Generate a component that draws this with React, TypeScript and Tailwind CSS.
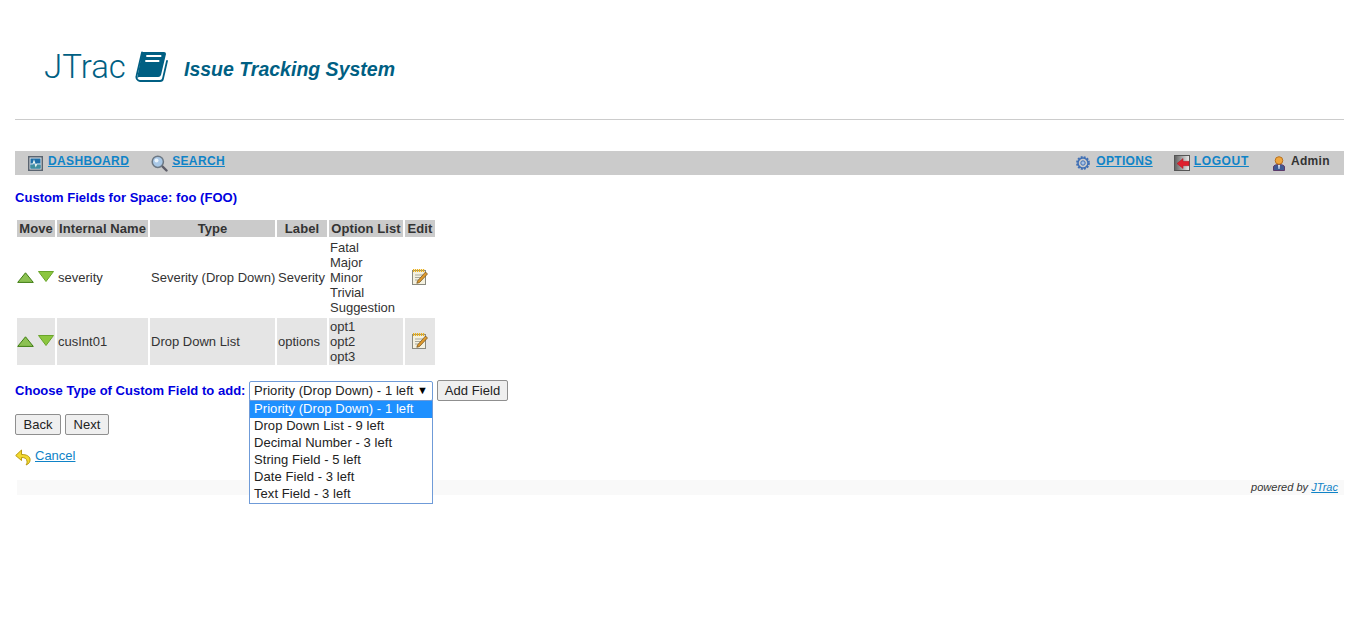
import React from "react";

const ROWS = [
  { name: "severity", type: "Severity (Drop Down)", label: "Severity", options: ["Fatal", "Major", "Minor", "Trivial", "Suggestion"], shaded: false },
  { name: "cusInt01", type: "Drop Down List", label: "options", options: ["opt1", "opt2", "opt3"], shaded: true },
];

const CHOICES = [
  "Priority (Drop Down) - 1 left",
  "Drop Down List - 9 left",
  "Decimal Number - 3 left",
  "String Field - 5 left",
  "Date Field - 3 left",
  "Text Field - 3 left",
];

// --- icons ---
function BookLogo() {
  return (
    <svg width="34" height="32" viewBox="0 0 34 32" className="shrink-0">
      <path d="M8 1h22a2 2 0 0 1 2 2l-5 21a3 3 0 0 1-3 2H5a2.500 2.500 0 0 0-2 1.500L8 2z" fill="#005f83" />
      <path d="M8 1.500 2.500 25a4 4 0 0 0 3.500 5h20a3 3 0 0 0 3-2.500L33 10" fill="none" stroke="#005f83" strokeWidth="1.800" strokeLinecap="round" />
      <path d="M12.300 5h15M11.300 10h14" fill="none" stroke="#fff" strokeWidth="1.800" />
    </svg>
  );
}

function DashboardIcon() {
  return (
    <svg width="15" height="15" viewBox="0 0 15 15" className="shrink-0">
      <rect x="0.750" y="0.750" width="13.500" height="13.500" fill="#dfe3e6" stroke="#5a6470" strokeWidth="1.500" />
      <rect x="2.500" y="2.500" width="10" height="10" fill="#1f6fa8" />
      <rect x="2.500" y="9" width="10" height="3.500" fill="#3f8f9f" />
      <path d="M2.500 8H5l1-3 1.800 5 1-2h3.700" fill="none" stroke="#eaf6f0" strokeWidth="1.100" />
    </svg>
  );
}

function SearchIcon() {
  return (
    <svg width="17" height="17" viewBox="0 0 17 17" className="shrink-0">
      <path d="m10.500 10.500 5 5" stroke="#5d5d68" strokeWidth="2.400" strokeLinecap="round" />
      <circle cx="6.800" cy="6.800" r="5.600" fill="#a9c8e6" stroke="#6c7884" strokeWidth="1.500" />
      <circle cx="5.500" cy="5.500" r="2" fill="#e9f3fb" />
    </svg>
  );
}

function OptionsIcon() {
  return (
    <svg width="14" height="14" viewBox="0 0 14 14" className="shrink-0">
      <circle cx="7" cy="7" r="5" fill="none" stroke="#3f6fb5" strokeWidth="1.500" />
      <circle cx="7" cy="7" r="6" fill="none" stroke="#3f6fb5" strokeWidth="1.800" strokeDasharray="2 1.140" />
      <circle cx="7" cy="7" r="2.200" fill="#a9c3e6" stroke="#3f6fb5" />
    </svg>
  );
}

function LogoutIcon() {
  return (
    <svg width="16" height="16" viewBox="0 0 16 16" className="shrink-0">
      <defs>
        <linearGradient id="logout-door" x1="0" x2="1" y1="0" y2="0">
          <stop offset="0" stopColor="#5f5f5f" />
          <stop offset="1" stopColor="#ececec" />
        </linearGradient>
      </defs>
      <rect x="0.500" y="0.500" width="15" height="15" fill="url(#logout-door)" stroke="#555" />
      <path d="M3 8.500 9 3.500v2.800h6v4.400H9v2.800z" fill="#e0202e" stroke="#a81622" strokeWidth="0.500" />
    </svg>
  );
}

function UserIcon() {
  return (
    <svg width="12" height="15" viewBox="0 0 12 15" className="shrink-0">
      <path d="M.500 14.500V11c0-1.500 2-2.500 5.500-2.500s5.500 1 5.500 2.500v3.500z" fill="#3e5a94" stroke="#5b3a6a" />
      <path d="M5 9h2l-.5 4h-1z" fill="#d9e2f0" />
      <circle cx="6" cy="4.500" r="3.800" fill="#f0a73e" stroke="#b8701e" />
    </svg>
  );
}

function ArrowUp() {
  return (
    <svg width="17" height="11" viewBox="0 0 17 11" className="shrink-0">
      <path d="M8.500.800 16.300 10.400H.700z" fill="#8cc152" stroke="#3f7d12" />
    </svg>
  );
}

function ArrowDown() {
  return (
    <svg width="16" height="11" viewBox="0 0 16 11" className="shrink-0 -mt-[1px]">
      <path d="M.500.500h15L8 10.500z" fill="#8cc63f" stroke="#6aa52a" />
    </svg>
  );
}

function EditIcon() {
  return (
    <svg width="16" height="17" viewBox="0 0 16 17">
      <rect x="0.500" y="2.500" width="13" height="14" fill="#f4f1e0" stroke="#8a8a80" />
      <path d="M1 2.500h12" stroke="#e8b020" strokeWidth="3" strokeDasharray="1.200 .8" />
      <path d="M3 7h8M3 9.500h6M3 12h5" stroke="#a9a99d" />
      <path d="M5.500 13 13.500 4l2 2-8 8.500-2.700.8z" fill="#e09a2c" stroke="#6a4a1a" strokeWidth="0.700" />
    </svg>
  );
}

function CancelIcon() {
  return (
    <svg width="16" height="17" viewBox="0 0 16 17" className="shrink-0">
      <path d="M6.500 1 .700 6.500l5.800 5V8.500c3 0 5 .8 5.500 3.500.3 1.500-.2 3-1 4 3-1 4.500-3.500 4-6-.6-3-3.500-4.500-8.500-4.500z" fill="#f2d92f" stroke="#b89a12" />
    </svg>
  );
}

function NavLink({ children, wide }: { children: React.ReactNode; wide?: boolean }) {
  return (
    <a className={`text-[#0f83c7] underline font-bold text-[12px] -mt-[3px] ${wide ? "tracking-[0.65px]" : "tracking-[0.35px]"}`}>
      {children}
    </a>
  );
}

const BUTTON = "h-[21px] bg-[#efefef] border border-[#8f8f8f] rounded-[2px] tracking-[0.07px] text-[#222]";

export default function App() {
  return (
    <div className="min-h-screen bg-white px-[15px] text-[13px] leading-[15px] text-[#333] font-['Liberation_Sans',Arial,sans-serif]">
      {/* header */}
      <div className="h-[120px] border-b border-[#ccc] pt-[46px] pl-[29px] flex items-start">
        <span className="w-[81px] text-[#005f83] text-[33px] leading-[42px] font-['Roboto',sans-serif] font-light whitespace-nowrap">JTrac</span>
        <span className="ml-[9px] mt-[5px]"><BookLogo /></span>
        <span className="ml-[16px] mt-[11px] text-[#005f83] text-[19.500px] leading-[24px] font-bold italic whitespace-nowrap">Issue Tracking System</span>
      </div>

      {/* nav */}
      <div className="mt-[31px] h-[24px] bg-[#cbcbcb] flex items-center pl-[13px] pr-[14px]">
        <div className="flex items-center gap-[5px]"><DashboardIcon /><NavLink>DASHBOARD</NavLink></div>
        <div className="flex items-center gap-[4px] ml-[22px]"><SearchIcon /><NavLink>SEARCH</NavLink></div>
        <div className="flex items-center gap-[6px] ml-auto"><OptionsIcon /><NavLink>OPTIONS</NavLink></div>
        <div className="flex items-center gap-[4px] ml-[21px]"><LogoutIcon /><NavLink wide>LOGOUT</NavLink></div>
        <div className="flex items-center gap-[6px] ml-[24px]"><UserIcon /><span className="font-bold text-[12px] tracking-[0.35px] -mt-[3px]">Admin</span></div>
      </div>

      <div className="mt-[15px] text-[#0000e0] font-bold tracking-[0.03px]">Custom Fields for Space: foo (FOO)</div>

      <table className="mt-[13px] w-[422px] table-fixed border-separate border-spacing-[2px]">
        <thead>
          <tr className="bg-[#cbcbcb] font-bold tracking-[0.07px]">
            <th className="w-[38px] h-[17px] p-0 whitespace-nowrap">Move</th>
            <th className="w-[91px] p-0 whitespace-nowrap">Internal Name</th>
            <th className="w-[125px] p-0 whitespace-nowrap">Type</th>
            <th className="w-[50px] p-0 whitespace-nowrap">Label</th>
            <th className="w-[74px] p-0 whitespace-nowrap">Option List</th>
            <th className="w-[30px] p-0 whitespace-nowrap">Edit</th>
          </tr>
        </thead>
        <tbody>
          {ROWS.map((row) => (
            <tr key={row.name} className={row.shaded ? "bg-[#e5e5e5]" : ""}>
              <td className="p-0">
                <div className="flex items-center gap-[4px] -mt-[1px]"><ArrowUp /><ArrowDown /></div>
              </td>
              <td className="px-[1px] py-[1px] whitespace-nowrap">{row.name}</td>
              <td className="px-[1px] py-[1px] whitespace-nowrap">{row.type}</td>
              <td className="px-[1px] py-[1px] whitespace-nowrap">{row.label}</td>
              <td className="px-[1px] py-[1px]">
                {row.options.map((o) => <div key={o}>{o}</div>)}
              </td>
              <td className="p-0"><div className="flex justify-center -mt-[2px]"><EditIcon /></div></td>
            </tr>
          ))}
        </tbody>
      </table>

      {/* choose field */}
      <div className="mt-[13px] flex items-center h-[21px]">
        <span className="w-[230px] text-[#0000e0] font-bold tracking-[0.03px] whitespace-nowrap">Choose Type of Custom Field to add:</span>
        <div className="relative ml-[4px]">
          <div className="w-[184px] h-[20px] bg-white border border-[#6f9bd8] rounded-[2px] pl-[4px] pr-[4px] flex items-center justify-between tracking-[0.07px] text-[#222]">
            <span className="whitespace-nowrap">{CHOICES[0]}</span>
            <span className="text-[11px] text-black">▼</span>
          </div>
          <div className="absolute left-0 top-[19px] w-[184px] bg-white border border-[#6f9bd8] tracking-[0.07px] text-[#222] z-10">
            {CHOICES.map((c, i) => (
              <div key={c} className={`h-[17px] leading-[16px] pl-[4px] ${i === 0 ? "bg-[#1e90ff] text-white" : ""}`}>{c}</div>
            ))}
          </div>
        </div>
        <button className={`ml-[4px] w-[71px] ${BUTTON}`}>Add Field</button>
      </div>

      <div className="mt-[13px] flex gap-[4px]">
        <button className={`w-[46px] ${BUTTON}`}>Back</button>
        <button className={`w-[44px] ${BUTTON}`}>Next</button>
      </div>

      <div className="mt-[14px] flex items-start gap-[4px]">
        <CancelIcon />
        <a className="text-[#0f83c7] underline -mt-[1px]">Cancel</a>
      </div>

      {/* footer */}
      <div className="mt-[14px] ml-[2px] h-[15px] bg-[#f9f9f9] text-right pr-[6px] text-[11px] leading-[15px] italic tracking-[0.02px]">
        powered by <a className="text-[#0f83c7] underline">JTrac</a>
      </div>
    </div>
  );
}
